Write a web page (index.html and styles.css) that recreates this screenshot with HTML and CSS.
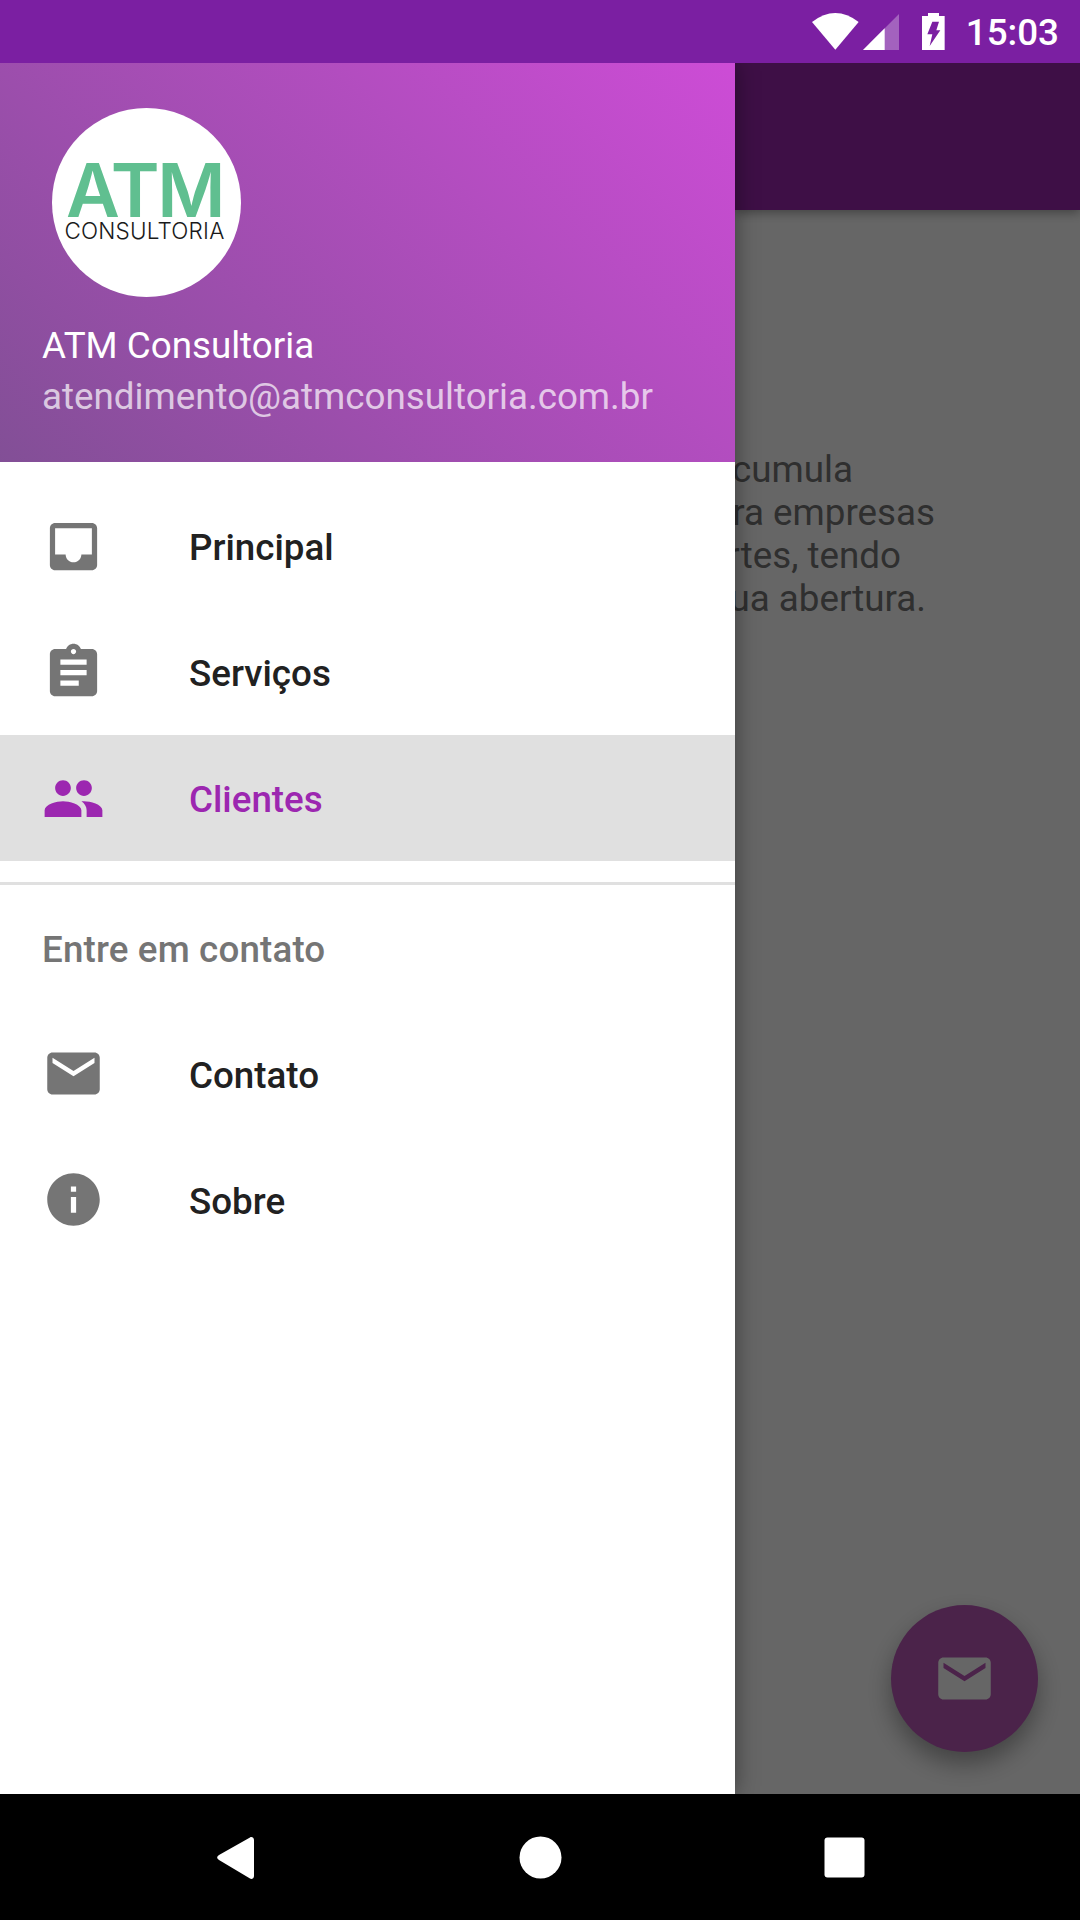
FILE: index.html
```html
<!DOCTYPE html>
<html lang="pt-BR">
<head>
<meta charset="utf-8">
<title>ATM Consultoria</title>
<link rel="stylesheet" href="styles.css">
</head>
<body>
<div class="status">
  <svg class="st-wifi" viewBox="98 38 140 110"><path d="M168 148L98 65Q168 11 238 65Z" fill="#fff"/></svg>
  <svg class="st-signal" viewBox="252 40 108 108"><path d="M252 148L360 40V148Z" fill="#fff" fill-opacity=".3"/><path d="M252 148L317 83V148Z" fill="#fff"/></svg>
  <svg class="st-battery" viewBox="427 36 68 112"><path fill="#fff" fill-rule="evenodd" d="M445 36H478V45H495V148H427V45H445ZM458 62L443 100H458L450 135L482 88H470L478 62Z"/></svg>
  <span class="clock">15:03</span>
</div>
<div class="stage">
  <aside class="drawer">
    <header class="head">
      <div class="logo">
        <span class="logo-atm">ATM</span>
        <span class="logo-sub">CONSULTORIA</span>
      </div>
      <div class="head-name">ATM Consultoria</div>
      <div class="head-mail">atendimento@atmconsultoria.com.br</div>
    </header>
    <nav class="menu">
      <a class="item">
        <svg class="ico" viewBox="0 0 24 24"><path d="M19 3H4.99c-1.11 0-1.98.89-1.98 2L3 19c0 1.1.88 2 1.99 2H19c1.1 0 2-.9 2-2V5c0-1.11-.9-2-2-2zm0 12h-4c0 1.66-1.35 3-3 3s-3-1.34-3-3H4.99V5H19v10z"/></svg>
        <span>Principal</span>
      </a>
      <a class="item">
        <svg class="ico" viewBox="0 0 24 24"><path d="M19 3h-4.18C14.4 1.84 13.3 1 12 1c-1.3 0-2.4.84-2.82 2H5c-1.1 0-2 .9-2 2v14c0 1.1.9 2 2 2h14c1.1 0 2-.9 2-2V5c0-1.1-.9-2-2-2zm-7 0c.55 0 1 .45 1 1s-.45 1-1 1-1-.45-1-1 .45-1 1-1zm2 14H7v-2h7v2zm3-4H7v-2h10v2zm0-4H7V7h10v2z"/></svg>
        <span>Serviços</span>
      </a>
      <a class="item item-on">
        <svg class="ico" viewBox="0 0 24 24"><path d="M16 11c1.66 0 2.99-1.34 2.99-3S17.66 5 16 5c-1.66 0-3 1.34-3 3s1.34 3 3 3zm-8 0c1.66 0 2.99-1.34 2.99-3S9.66 5 8 5C6.34 5 5 6.34 5 8s1.34 3 3 3zm0 2c-2.33 0-7 1.17-7 3.5V19h14v-2.5c0-2.33-4.67-3.5-7-3.5zm8 0c-.29 0-.62.02-.97.05 1.16.84 1.97 1.97 1.97 3.45V19h6v-2.5c0-2.33-4.67-3.5-7-3.5z"/></svg>
        <span>Clientes</span>
      </a>
      <div class="divider"></div>
      <div class="group">Entre em contato</div>
      <a class="item item-low">
        <svg class="ico" viewBox="0 0 24 24"><path d="M20 4H4c-1.1 0-1.99.9-1.99 2L2 18c0 1.1.9 2 2 2h16c1.1 0 2-.9 2-2V6c0-1.1-.9-2-2-2zm0 4l-8 5-8-5V6l8 5 8-5v2z"/></svg>
        <span>Contato</span>
      </a>
      <a class="item item-low">
        <svg class="ico" viewBox="0 0 24 24"><path d="M12 2C6.48 2 2 6.48 2 12s4.48 10 10 10 10-4.48 10-10S17.52 2 12 2zm1 15h-2v-6h2v6zm0-8h-2V7h2v2z"/></svg>
        <span>Sobre</span>
      </a>
    </nav>
  </aside>
  <main class="main">
    <div class="appbar"></div>
    <div class="body-text">
      <div class="line line-1">cumula</div>
      <div class="line line-2">ra empresas</div>
      <div class="line line-3">rtes, tendo</div>
      <div class="line line-4">ua abertura.</div>
    </div>
    <button class="fab">
      <svg class="fab-ico" viewBox="0 0 24 24"><path d="M20 4H4c-1.1 0-1.99.9-1.99 2L2 18c0 1.1.9 2 2 2h16c1.1 0 2-.9 2-2V6c0-1.1-.9-2-2-2zm0 4l-8 5-8-5V6l8 5 8-5v2z"/></svg>
    </button>
    <div class="scrim"></div>
  </main>
</div>
<div class="navbar">
  <svg class="nav-ico" viewBox="0 0 63 63"><path d="M46 11.500C47.500 10.500 50 11.500 50 14V50C50 52.500 47.500 53.500 46 52.500L15 34C12.500 32.500 12.500 30.500 15 29Z" fill="#fff"/></svg>
  <svg class="nav-ico" viewBox="0 0 63 63"><circle cx="31.500" cy="31.500" r="21" fill="#fff"/></svg>
  <svg class="nav-ico nav-square" viewBox="0 0 63 63"><rect x="11.500" y="11.500" width="40" height="40" rx="3" fill="#fff"/></svg>
</div>
</body>
</html>
```

FILE: styles.css
```css
* { box-sizing: border-box; }
html, body { margin: 0; padding: 0; }
body {
  width: 1080px;
  height: 1920px;
  display: flex;
  flex-direction: column;
  overflow: hidden;
  font-family: Roboto, "Liberation Sans", sans-serif;
  font-size: 36.75px;
  background: #000;
}

/* status bar */
.status {
  height: 63px;
  flex: none;
  position: relative;
  z-index: 3;
  background: #7b1fa2;
  display: flex;
  align-items: center;
  justify-content: flex-end;
  padding-right: 21px;
}
.st-wifi { width: 46.67px; height: 36.67px; }
.st-signal { width: 36px; height: 36px; margin-left: 4.5px; }
.st-battery { width: 22.67px; height: 37.33px; margin-left: 23px; }
.clock {
  margin-left: 21px;
  padding-top: 2px;
  color: #fff;
  font-weight: 500;
  line-height: 63px;
}

/* stage */
.stage { flex: 1; display: flex; min-height: 0; }

/* drawer */
.drawer {
  width: 735px;
  flex: none;
  background: #fff;
  position: relative;
  z-index: 2;
  box-shadow: 0 0 22px rgba(0, 0, 0, .42);
}
.head {
  height: 399px;
  padding: 45px 0 0 42px;
  background: linear-gradient(45deg, #824f96, #cd4cd6);
}
.logo {
  width: 189px;
  height: 189px;
  margin-left: 10px;
  border-radius: 50%;
  background: #fff;
  display: flex;
  flex-direction: column;
  align-items: center;
  padding: 53px 4px 0 0;
}
.logo-atm {
  font-family: Inter, sans-serif;
  font-weight: 600;
  font-size: 74px;
  line-height: 58px;
  letter-spacing: -2.5px;
  color: #60bf90;
}
.logo-sub {
  font-family: Inter, sans-serif;
  font-weight: 300;
  font-size: 22.5px;
  line-height: 24px;
  letter-spacing: .2px;
  color: #1a1a1a;
}
.head-name {
  margin-top: 23px;
  line-height: 51px;
  color: #fff;
}
.head-mail {
  line-height: 51px;
  color: rgba(255, 255, 255, .7);
}

/* menu */
.menu { padding-top: 21px; }
.item {
  height: 126px;
  display: flex;
  align-items: center;
  padding-left: 42px;
  font-weight: 500;
  color: #212121;
}
.item span { margin-left: 84px; padding-top: 3px; }
.item-low span { padding-top: 5px; }
.ico { width: 63px; height: 63px; fill: #757575; flex: none; }
.item-on { background: #e0e0e0; color: #9c27b0; }
.item-on .ico { fill: #9c27b0; }
.divider { height: 3px; margin-top: 21px; background: #e0e0e0; }
.group {
  height: 125px;
  display: flex;
  align-items: center;
  padding: 4px 0 0 42px;
  font-weight: 500;
  letter-spacing: .15px;
  color: #757575;
}

/* main behind the drawer */
.main {
  flex: 1;
  position: relative;
  overflow: hidden;
  background: #fff;
}
.appbar {
  height: 147px;
  background: #9c27b0;
  box-shadow: 0 3px 10px rgba(0, 0, 0, .35);
}
.body-text {
  padding-top: 238px;
  color: #757575;
  line-height: 43px;
}
.line { display: flex; justify-content: flex-end; white-space: nowrap; }
.line-1 { width: 118px; }
.line-2 { width: 200px; }
.line-3 { width: 166px; }
.line-4 { width: 191px; }
.fab {
  position: absolute;
  right: 42px;
  bottom: 42px;
  width: 147px;
  height: 147px;
  padding: 0;
  border: 0;
  border-radius: 50%;
  background: #bb57b8;
  display: flex;
  align-items: center;
  justify-content: center;
  box-shadow: 0 12px 24px rgba(0, 0, 0, .35);
}
.fab-ico { width: 63px; height: 63px; fill: #fff; }
.scrim {
  position: absolute;
  inset: 0;
  background: rgba(0, 0, 0, .6);
}

/* nav bar */
.navbar {
  height: 126px;
  flex: none;
  position: relative;
  z-index: 3;
  background: #000;
  display: flex;
  align-items: center;
  justify-content: center;
  gap: 242px;
}
.nav-ico { width: 63px; height: 63px; }
.nav-square { margin-left: -1px; }
```
